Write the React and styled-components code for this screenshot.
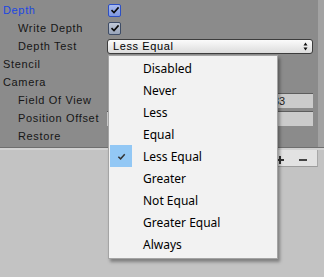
import React from 'react';
import styled, { createGlobalStyle } from 'styled-components';

const GlobalStyle = createGlobalStyle`
  html, body {
    margin: 0;
    padding: 0;
    background: #c3c3c3;
  }
  body {
    width: 324px;
    height: 277px;
    overflow: hidden;
  }
`;

const Screen = styled.div`
  position: relative;
  width: 324px;
  height: 277px;
  background: #c3c3c3;
  font-family: 'Liberation Sans', Arial, sans-serif;
`;

const Inspector = styled.div`
  display: flex;
  height: 147px;
  background: #8b8b8b;
  border-bottom: 1px solid #6f6f6f;
  box-shadow: 0 2px 0 #d2d2d2;
`;

const Main = styled.div`
  flex: 1;
  padding: 1px 5px 0 0;
  display: flex;
  flex-direction: column;
`;

const ScrollStrip = styled.div`
  width: 6px;
  background: #a2a2a2;
`;

const Row = styled.div`
  display: grid;
  grid-template-columns: 107px 1fr;
  align-items: center;
  height: 18px;
`;

const Label = styled.span`
  padding-left: ${(p) => (p.$indent ? 18 : 3)}px;
  font-size: 11px;
  letter-spacing: 0.65px;
  color: ${(p) => (p.$active ? '#1b47e2' : '#161616')};
  white-space: nowrap;
`;

const Check = styled.span`
  width: 11px;
  height: 11px;
  margin-left: 1px;
  border: 1px solid ${(p) => (p.$focus ? '#2c4fc4' : '#3e4c66')};
  border-radius: 2px;
  background: ${(p) =>
    p.$focus
      ? 'linear-gradient(#a9bbf0, #7f98e0)'
      : 'linear-gradient(#c2cad8, #98a4ba)'};
  display: flex;
  align-items: center;
  justify-content: center;
`;

const Dropdown = styled.div`
  height: 13px;
  display: flex;
  align-items: center;
  justify-content: space-between;
  padding: 0 4px 0 5px;
  border: 1px solid #3c3c3c;
  border-radius: 3px;
  background: linear-gradient(#fbfbfb, #dcdcdc);
  font-size: 11px;
  letter-spacing: 0.6px;
  color: #000;
`;

const Field = styled.div`
  height: 14px;
  width: ${(p) => p.$width || 'auto'};
  margin-left: ${(p) => (p.$width ? 'auto' : '0')};
  border-top: 1px solid #5d5d5d;
  background: #cbcbcb;
  font-size: 11px;
  line-height: 14px;
  padding-left: ${(p) => p.$pad ?? 3}px;
  color: #222;
`;

const FooterRow = styled.div`
  display: flex;
  justify-content: flex-end;
  padding-right: 6px;
  margin-top: 2px;
`;

const Toolbar = styled.div`
  width: 52px;
  height: 17px;
  padding-right: 10px;
  box-sizing: border-box;
  background: #e2e2e2;
  border-bottom: 1px solid #9c9c9c;
  border-right: 1px solid #a8a8a8;
  display: flex;
  align-items: center;
  justify-content: flex-end;
  gap: 15px;
`;

const ToolIcon = styled.svg`
  display: block;
  margin-top: 4px;
`;

const Popup = styled.div`
  position: absolute;
  left: 108px;
  top: 55px;
  width: 168px;
  padding: 1px 0 3px;
  background: #f2f2f2;
  border: 1px solid #a4a4a4;
  box-shadow: 2px 3px 3px rgba(0, 0, 0, 0.35);
  font-family: 'Noto Sans', 'Segoe UI', sans-serif;
  font-size: 12px;
  color: #000;
`;

const Item = styled.div`
  display: flex;
  align-items: center;
  height: 22px;
`;

const Gutter = styled.span`
  width: 22px;
  height: 22px;
  margin: 0 11px 0 1px;
  display: flex;
  align-items: center;
  justify-content: center;
  background: ${(p) => (p.$on ? '#93c8f5' : 'transparent')};
`;

const Tick = ({ color = '#222', size = 10 }) => (
  <svg width={size} height={size} viewBox="0 0 10 10">
    <path d="M1.5 5.2 L4 7.6 L8.6 2.4" fill="none" stroke={color} strokeWidth="1.6" />
  </svg>
);

const Arrows = () => (
  <svg width="5" height="9" viewBox="0 0 5 9">
    <path d="M2.5 0.5 L4.5 3.5 L0.5 3.5 Z M2.5 8.5 L4.5 5.5 L0.5 5.5 Z" fill="#111" />
  </svg>
);

const options = [
  'Disabled',
  'Never',
  'Less',
  'Equal',
  'Less Equal',
  'Greater',
  'Not Equal',
  'Greater Equal',
  'Always',
];

export default function App() {
  const selected = 'Less Equal';
  return (
    <Screen>
      <GlobalStyle />
      <Inspector>
        <Main>
          <Row>
            <Label $active>Depth</Label>
            <Check $focus>
              <Tick color="#0a0a0a" size={10} />
            </Check>
          </Row>
          <Row>
            <Label $indent>Write Depth</Label>
            <Check>
              <Tick color="#0a0a0a" size={10} />
            </Check>
          </Row>
          <Row>
            <Label $indent>Depth Test</Label>
            <Dropdown>
              <span>{selected}</span>
              <Arrows />
            </Dropdown>
          </Row>
          <Row>
            <Label>Stencil</Label>
          </Row>
          <Row>
            <Label>Camera</Label>
          </Row>
          <Row>
            <Label $indent>Field Of View</Label>
            <Field $width="40px" $pad={0}>
              33
            </Field>
          </Row>
          <Row>
            <Label $indent>Position Offset</Label>
            <Field />
          </Row>
          <Row>
            <Label $indent>Restore</Label>
          </Row>
        </Main>
        <ScrollStrip />
      </Inspector>
      <FooterRow>
        <Toolbar>
          <ToolIcon width="8" height="8" viewBox="0 0 8 8">
            <path d="M0 4 H8 M4 0 V8" stroke="#333" strokeWidth="2" />
          </ToolIcon>
          <ToolIcon width="8" height="8" viewBox="0 0 8 8">
            <path d="M0 4 H8" stroke="#444" strokeWidth="2" />
          </ToolIcon>
        </Toolbar>
      </FooterRow>
      <Popup>
        {options.map((o) => (
          <Item key={o}>
            <Gutter $on={o === selected}>{o === selected && <Tick color="#333" size={9} />}</Gutter>
            <span>{o}</span>
          </Item>
        ))}
      </Popup>
    </Screen>
  );
}
